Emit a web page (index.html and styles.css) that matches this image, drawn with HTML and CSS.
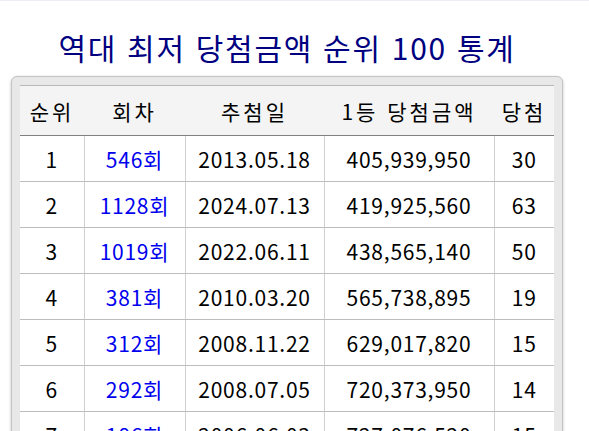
FILE: index.html
```html
<!DOCTYPE html>
<html lang="ko">
<head>
<meta charset="utf-8">
<title>역대 최저 당첨금액 순위 100 통계</title>
<link rel="stylesheet" href="styles.css">
</head>
<body>
<div class="topline"></div>
<main class="page">
  <h1 class="title">역대 최저 당첨금액 순위 100 통계</h1>
  <div class="box">
    <table class="stats">
      <colgroup>
        <col class="c1"><col class="c2"><col class="c3"><col class="c4"><col class="c5">
      </colgroup>
      <thead>
        <tr><th>순위</th><th>회차</th><th>추첨일</th><th>1등 당첨금액</th><th>당첨</th></tr>
      </thead>
      <tbody>
        <tr><td>1</td><td><a href="#">546회</a></td><td>2013.05.18</td><td>405,939,950</td><td>30</td></tr>
        <tr><td>2</td><td><a href="#">1128회</a></td><td>2024.07.13</td><td>419,925,560</td><td>63</td></tr>
        <tr><td>3</td><td><a href="#">1019회</a></td><td>2022.06.11</td><td>438,565,140</td><td>50</td></tr>
        <tr><td>4</td><td><a href="#">381회</a></td><td>2010.03.20</td><td>565,738,895</td><td>19</td></tr>
        <tr><td>5</td><td><a href="#">312회</a></td><td>2008.11.22</td><td>629,017,820</td><td>15</td></tr>
        <tr><td>6</td><td><a href="#">292회</a></td><td>2008.07.05</td><td>720,373,950</td><td>14</td></tr>
        <tr><td>7</td><td><a href="#">186회</a></td><td>2006.06.03</td><td>727,076,520</td><td>15</td></tr>
      </tbody>
    </table>
  </div>
</main>
</body>
</html>
```
FILE: styles.css
```css
html, body {
  margin: 0;
  padding: 0;
  background: #ffffff;
}
body {
  font-family: "Noto Sans CJK KR", "Noto Sans", sans-serif;
  color: #000;
}
.topline {
  height: 1px;
  background: #eeeef8;
}
.page {
  width: 574px;
}
.title {
  margin: 29px 0 11px;
  font-size: 30px;
  line-height: 35px;
  letter-spacing: 1.7px;
  font-weight: normal;
  color: #000080;
  text-align: center;
}
.box {
  margin: 0 11px;
  padding: 8px;
  background: #e8e8e8;
  border: 1px solid #c4c4c4;
  border-radius: 6px;
  box-shadow: 0 1px 3px rgba(0,0,0,0.25);
  overflow: hidden;
}
.stats {
  width: 534px;
  border-collapse: collapse;
  table-layout: fixed;
  background: #ffffff;
  font-size: 21px;
}
.c1 { width: 64px; }
.c2 { width: 101px; }
.c3 { width: 139px; }
.c4 { width: 170px; }
.c5 { width: 60px; }
.stats th {
  background: #f4f4f4;
  font-weight: normal;
  height: 49px;
  padding: 0;
  letter-spacing: 3px;
  border-top: 1px solid #b8b8b8;
  border-bottom: 1px solid #808080;
  text-align: center;
  white-space: nowrap;
}
.stats td {
  height: 45px;
  padding: 0;
  letter-spacing: 0.75px;
  text-align: center;
  border-bottom: 1px solid #bdbdbd;
  border-left: 1px solid #d0d0d0;
  white-space: nowrap;
}
.stats td:first-child {
  border-left: none;
}
.stats a {
  color: #0000ee;
  text-decoration: none;
}
```
